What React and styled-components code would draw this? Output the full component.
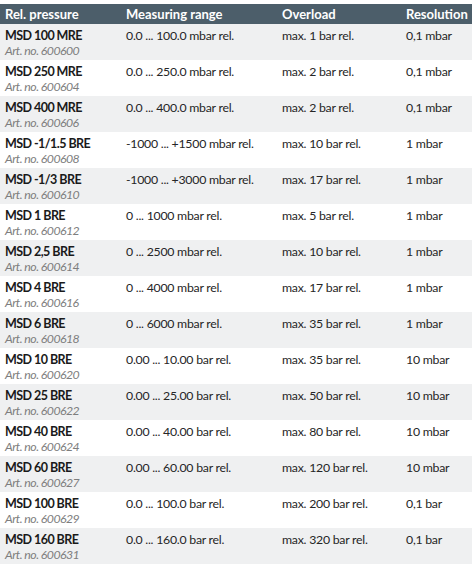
import styled, { createGlobalStyle } from 'styled-components';

const rows = [
  ['MSD 100 MRE', '600600', '0.0 ... 100.0 mbar rel.', 'max. 1 bar rel.', '0,1 mbar'],
  ['MSD 250 MRE', '600604', '0.0 ... 250.0 mbar rel.', 'max. 2 bar rel.', '0,1 mbar'],
  ['MSD 400 MRE', '600606', '0.0 ... 400.0 mbar rel.', 'max. 2 bar rel.', '0,1 mbar'],
  ['MSD -1/1.5 BRE', '600608', '-1000 ... +1500 mbar rel.', 'max. 10 bar rel.', '1 mbar'],
  ['MSD -1/3 BRE', '600610', '-1000 ... +3000 mbar rel.', 'max. 17 bar rel.', '1 mbar'],
  ['MSD 1 BRE', '600612', '0 ... 1000 mbar rel.', 'max. 5 bar rel.', '1 mbar'],
  ['MSD 2,5 BRE', '600614', '0 ... 2500 mbar rel.', 'max. 10 bar rel.', '1 mbar'],
  ['MSD 4 BRE', '600616', '0 ... 4000 mbar rel.', 'max. 17 bar rel.', '1 mbar'],
  ['MSD 6 BRE', '600618', '0 ... 6000 mbar rel.', 'max. 35 bar rel.', '1 mbar'],
  ['MSD 10 BRE', '600620', '0.00 ... 10.00 bar rel.', 'max. 35 bar rel.', '10 mbar'],
  ['MSD 25 BRE', '600622', '0.00 ... 25.00 bar rel.', 'max. 50 bar rel.', '10 mbar'],
  ['MSD 40 BRE', '600624', '0.00 ... 40.00 bar rel.', 'max. 80 bar rel.', '10 mbar'],
  ['MSD 60 BRE', '600627', '0.00 ... 60.00 bar rel.', 'max. 120 bar rel.', '10 mbar'],
  ['MSD 100 BRE', '600629', '0.0 ... 100.0 bar rel.', 'max. 200 bar rel.', '0,1 bar'],
  ['MSD 160 BRE', '600631', '0.0 ... 160.0 bar rel.', 'max. 320 bar rel.', '0,1 bar'],
];

const GlobalStyle = createGlobalStyle`
  body {
    margin: 0;
    background: #ffffff;
    font-family: Lato, "Noto Sans", sans-serif;
  }
`;

const Table = styled.div`
  padding-top: 4px;
  width: 472px;
`;

const Row = styled.div`
  display: grid;
  grid-template-columns: 121px 156px 124px 1fr;
  height: ${p => (p.$head ? '20px' : '36px')};
  background: ${p => (p.$head ? '#4c5e6a' : p.$shade ? '#eff0f1' : '#ffffff')};
  align-items: ${p => (p.$head ? 'center' : 'start')};
`;

const Cell = styled.div`
  padding-left: 5px;
  padding-top: ${p => (p.$head ? '0' : '4px')};
  font-size: ${p => (p.$head ? '13px' : '12.3px')};
  line-height: 15px;
  letter-spacing: ${p => (p.$head ? '0' : '-0.25px')};
  color: ${p => (p.$head ? '#ffffff' : '#262626')};
  font-weight: ${p => (p.$head ? 700 : 400)};
  white-space: nowrap;
`;

const Name = styled.div`
  font-size: 12.5px;
  font-weight: 700;
  letter-spacing: -0.55px;
  color: #1a1a1a;
`;

const ArtNo = styled.div`
  font-size: 12.3px;
  font-style: italic;
  letter-spacing: -0.55px;
  color: #7e7e7e;
`;

export default function App() {
  return (
    <>
      <GlobalStyle />
      <Table>
        <Row $head>
          <Cell $head>Rel. pressure</Cell>
          <Cell $head>Measuring range</Cell>
          <Cell $head>Overload</Cell>
          <Cell $head>Resolution</Cell>
        </Row>
        {rows.map((r, i) => (
          <Row key={r[1]} $shade={i % 2 === 0}>
            <Cell>
              <Name>{r[0]}</Name>
              <ArtNo>Art. no. {r[1]}</ArtNo>
            </Cell>
            <Cell>{r[2]}</Cell>
            <Cell>{r[3]}</Cell>
            <Cell>{r[4]}</Cell>
          </Row>
        ))}
      </Table>
    </>
  );
}
